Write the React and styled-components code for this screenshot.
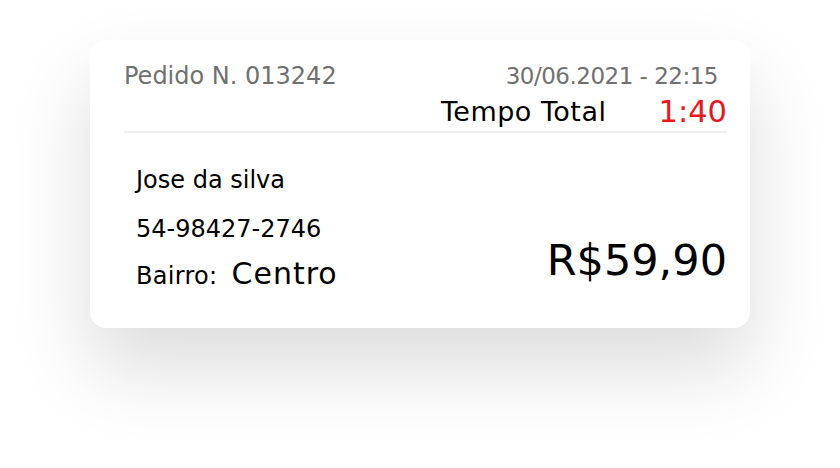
import React from "react";
import styled, { createGlobalStyle } from "styled-components";

const Global = createGlobalStyle`
  html, body { margin: 0; padding: 0; background: #ffffff; }
  body { font-family: "DejaVu Sans", "Open Sans", sans-serif; }
  * { box-sizing: border-box; }
`;

const Page = styled.div`
  width: 840px;
  height: 468px;
  padding: 40px 90px;
  background: #ffffff;
`;

const Card = styled.div`
  width: 660px;
  height: 288px;
  background: #ffffff;
  border-radius: 16px;
  box-shadow: 0 40px 80px rgba(0, 0, 0, 0.14);
  display: flex;
  flex-direction: column;
`;

const Header = styled.div`
  padding: 24px 23px 0 34px;
  display: flex;
  flex-direction: column;
`;

const MetaRow = styled.div`
  display: flex;
  justify-content: space-between;
  align-items: baseline;
  padding-right: 9px;
  height: 24px;
  line-height: 24px;
  color: #707070;
  white-space: nowrap;
`;

const MetaText = styled.span`
  font-size: ${(p) => p.$size}px;
  letter-spacing: ${(p) => p.$ls || 0}px;
`;

const TotalRow = styled.div`
  margin-top: 6px;
  height: 36px;
  display: flex;
  justify-content: flex-end;
  align-items: center;
  gap: 52px;
  white-space: nowrap;
`;

const TotalLabel = styled.span`
  font-size: 27px;
  letter-spacing: 0.5px;
  line-height: 36px;
  color: #000000;
`;

const TotalTime = styled.span`
  font-size: 30.5px;
  line-height: 36px;
  color: #e6191e;
`;

const Divider = styled.div`
  margin-top: 1px;
  height: 2px;
  background: #eeeeee;
`;

const Body = styled.div`
  padding: 35px 23px 0 46px;
  display: flex;
  justify-content: space-between;
  align-items: flex-end;
`;

const Info = styled.div`
  display: flex;
  flex-direction: column;
`;

const InfoLine = styled.div`
  font-size: 24px;
  line-height: 24px;
  margin-top: ${(p) => p.$mt || 0}px;
  color: #000000;
  white-space: nowrap;
`;

const District = styled.div`
  margin-top: 17px;
  display: flex;
  align-items: baseline;
  gap: 14px;
  line-height: 32px;
  white-space: nowrap;
`;

const DistrictLabel = styled.span`
  font-size: 24px;
  letter-spacing: 0.3px;
  color: #000000;
`;

const DistrictValue = styled.span`
  font-size: 30px;
  letter-spacing: 1px;
  color: #000000;
`;

const Price = styled.div`
  font-size: 43px;
  line-height: 48px;
  margin-bottom: 8px;
  color: #000000;
  white-space: nowrap;
`;

export default function App() {
  return (
    <>
      <Global />
      <Page>
        <Card>
          <Header>
            <MetaRow>
              <MetaText $size={24}>Pedido N. 013242</MetaText>
              <MetaText $size={23} $ls={-0.5}>30/06.2021 - 22:15</MetaText>
            </MetaRow>
            <TotalRow>
              <TotalLabel>Tempo Total</TotalLabel>
              <TotalTime>1:40</TotalTime>
            </TotalRow>
            <Divider />
          </Header>
          <Body>
            <Info>
              <InfoLine>Jose da silva</InfoLine>
              <InfoLine $mt={25}>54-98427-2746</InfoLine>
              <District>
                <DistrictLabel>Bairro:</DistrictLabel>
                <DistrictValue>Centro</DistrictValue>
              </District>
            </Info>
            <Price>R$59,90</Price>
          </Body>
        </Card>
      </Page>
    </>
  );
}
